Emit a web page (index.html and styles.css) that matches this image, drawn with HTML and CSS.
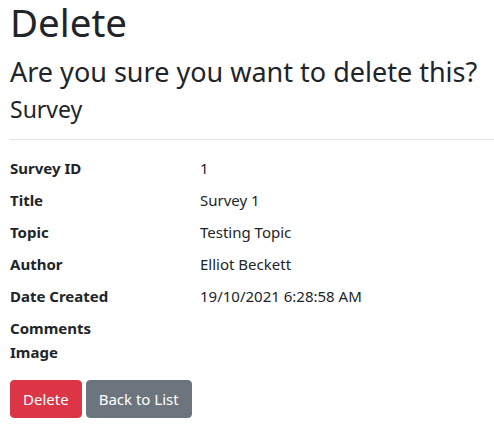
FILE: index.html
```html
<!DOCTYPE html>
<html lang="en">
<head>
<meta charset="utf-8">
<title>Delete</title>
<link rel="stylesheet" href="styles.css">
</head>
<body>
<main class="page">
  <h1 class="title">Delete</h1>
  <h3 class="confirm">Are you sure you want to delete this?</h3>
  <div class="record">
    <h4 class="entity">Survey</h4>
    <hr class="divider">
    <dl class="details">
      <dt>Survey ID</dt><dd>1</dd>
      <dt>Title</dt><dd>Survey 1</dd>
      <dt>Topic</dt><dd>Testing Topic</dd>
      <dt>Author</dt><dd>Elliot Beckett</dd>
      <dt>Date Created</dt><dd>19/10/2021 6:28:58 AM</dd>
      <dt>Comments</dt><dd></dd>
      <dt>Image</dt><dd></dd>
    </dl>
    <form class="actions">
      <button type="submit" class="btn btn-danger">Delete</button>
      <a href="#" class="btn btn-secondary">Back to List</a>
    </form>
  </div>
</main>
</body>
</html>
```
FILE: styles.css
```css
html, body {
  margin: 0;
  padding: 0;
}
body {
  font-family: "Noto Sans", "DejaVu Sans", sans-serif;
  font-size: 15px;
  line-height: 24px;
  color: #212529;
  background: #fff;
}
.page {
  padding: 0 0 0 10px;
}
h1, h3, h4 {
  margin: 0;
  font-weight: 400;
  color: #212529;
}
.title {
  font-size: 38.5px;
  line-height: 48px;
  margin: -2px 0 9px 0;
}
.confirm {
  font-size: 27px;
  line-height: 33.6px;
  margin-bottom: 6px;
}
.entity {
  font-size: 23px;
  line-height: 28.8px;
  margin-bottom: 16px;
}
.divider {
  margin: 0 0 16px 0;
  border: 0;
  border-top: 1px solid rgba(0, 0, 0, 0.1);
  height: 0;
}
.details {
  display: grid;
  grid-template-columns: 190px 1fr;
  margin: 0 0 16px 0;
}
.details dt {
  font-weight: 700;
}
.details dd {
  margin: 0 0 8px 0;
}
.actions {
  display: flex;
  gap: 4px;
}
.btn {
  display: inline-block;
  font-family: inherit;
  font-size: 15px;
  line-height: 24px;
  padding: 6px 12px;
  border: 1px solid transparent;
  border-radius: 4px;
  color: #fff;
  text-decoration: none;
  cursor: pointer;
}
.btn-danger {
  background: #dc3545;
  border-color: #dc3545;
}
.btn-secondary {
  background: #6c757d;
  border-color: #6c757d;
}
```
